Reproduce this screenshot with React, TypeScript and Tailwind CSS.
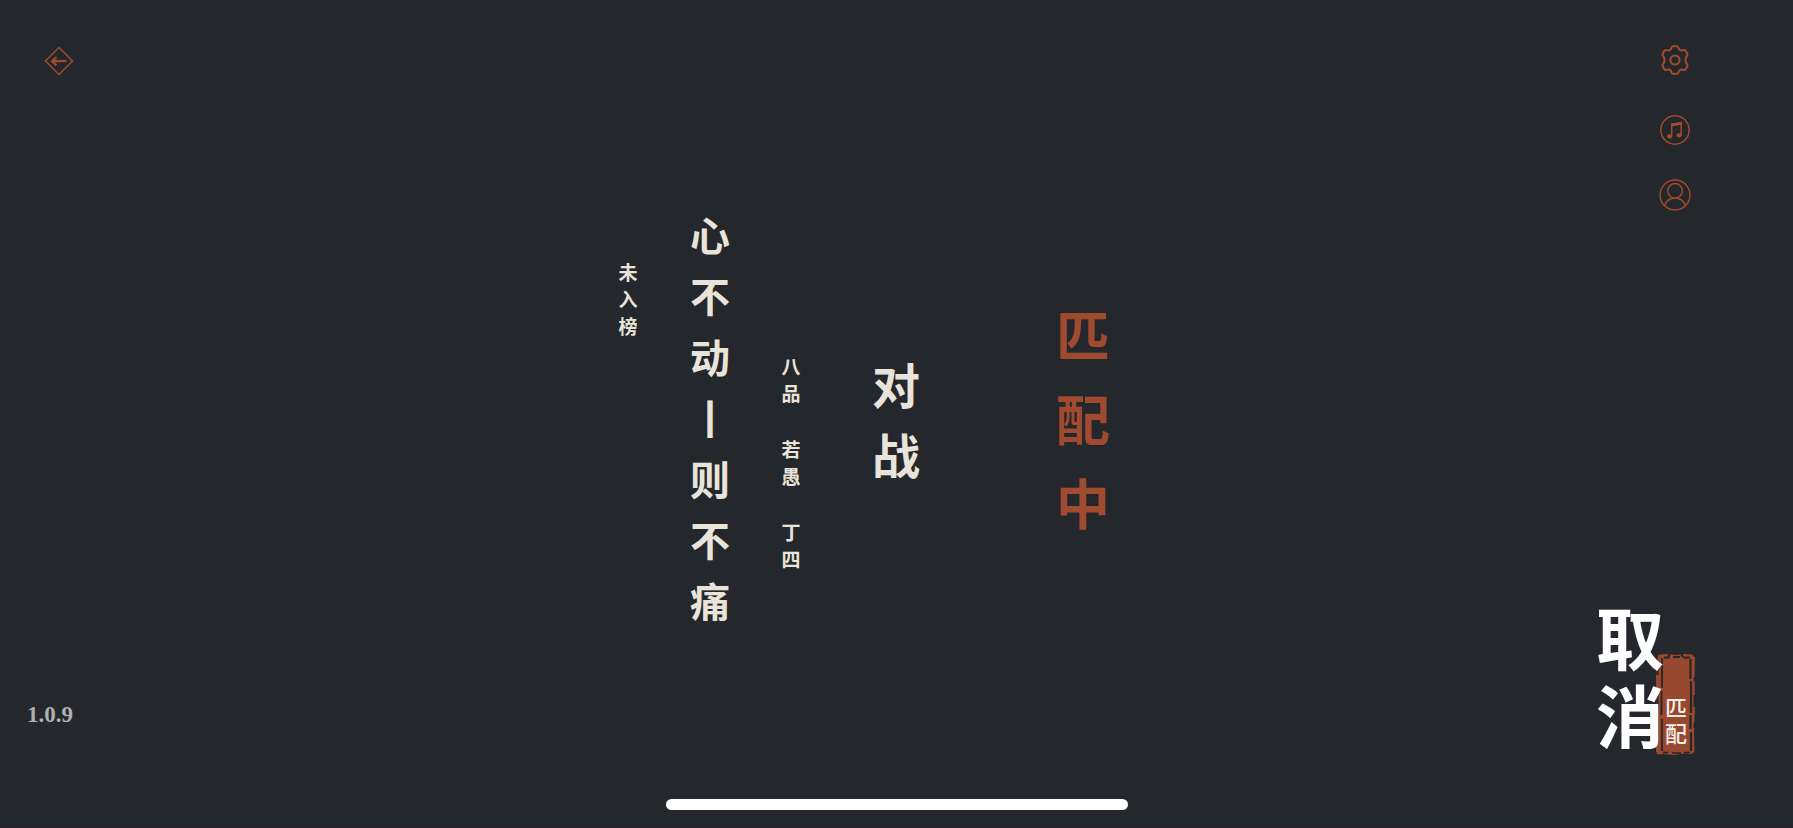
import React from "react";

const BRUSH = "font-['Noto_Sans_CJK_SC',sans-serif] font-bold";

function BackIcon() {
  return (
    <svg viewBox="0 0 30 30" className="w-[30px] h-[30px]" fill="none" stroke="currentColor" strokeWidth="1.5">
      <path d="M15 1.500 28.500 15 15 28.500 1.500 15Z" />
      <path d="M22.500 15.200H8.500M12.500 11 8 15.200l4.500 4.200" strokeWidth="2.200" />
    </svg>
  );
}

function GearIcon() {
  return (
    <svg viewBox="0 0 30 30" className="w-[30px] h-[30px]" fill="none" stroke="currentColor" strokeWidth="2" strokeLinejoin="round">
      <path d="M13.2 1.2h3.6c1.2 0 1.6.7 1.8 1.8.4 1.9 2.2 2.9 4.2 2.2 1.5-.5 2.4-.3 3 .8l1.4 2.4c.6 1.1.5 1.9-.4 2.8-1.7 1.7-1.7 5.9 0 7.6.9.9 1 1.7.4 2.800l-1.4 2.400c-.6 1.100-1.500 1.300-3 .8-2-.7-3.800.3-4.200 2.200-.2 1.100-.6 1.800-1.800 1.800h-3.600c-1.200 0-1.600-.7-1.800-1.800-.4-1.900-2.200-2.900-4.200-2.200-1.500.5-2.400.3-3-.8l-1.400-2.400c-.6-1.100-.5-1.900.4-2.800 1.700-1.700 1.700-5.900 0-7.600-.9-.9-1-1.700-.4-2.800l1.400-2.400c.6-1.100 1.500-1.300 3-.8 2 .7 3.800-.3 4.200-2.200.2-1.100.6-1.800 1.800-1.800Z" />
      <circle cx="15" cy="15" r="4.600" />
    </svg>
  );
}

function MusicIcon() {
  return (
    <svg viewBox="0 0 30 30" className="w-[30px] h-[30px]" fill="none" stroke="currentColor" strokeWidth="1.5">
      <circle cx="15" cy="15" r="14.200" />
      <path d="M11.700 21.500V9.200l9.500-1.600v12.600" />
      <path d="M11 8.700 22 6.900v2.800l-11 1.700Z" fill="currentColor" stroke="none" />
      <ellipse cx="9.600" cy="21.400" rx="2.600" ry="2.100" fill="currentColor" stroke="none" />
      <ellipse cx="19" cy="20.300" rx="2.600" ry="2.100" fill="currentColor" stroke="none" />
    </svg>
  );
}

function UserIcon() {
  return (
    <svg viewBox="0 0 32 32" className="w-8 h-8" fill="none" stroke="currentColor" strokeWidth="1.4">
      <circle cx="16" cy="16" r="15" />
      <circle cx="16" cy="11.800" r="7.300" />
      <path d="M5.500 26.600C7.400 21.700 11 19 16 19s8.600 2.700 10.500 7.600" />
    </svg>
  );
}

function SealFrame() {
  return (
    <svg viewBox="0 0 40 104" className="absolute inset-0 w-full h-full" fill="none">
      <path d="M2 2 9 1l12 1 8-1 7 .5 3 3-.5 20 .5 30-1 25 .5 19-3 2.500-8-.5-9 1.500-11-1-6 .5-1.500-3 .5-40-.5-35Z" fill="#98482e" />
      <g stroke="#24272b">
        <path d="M6 5v30M5.500 38v24M6 66v32" strokeWidth="1.800" />
        <path d="M8 4.500h6M17 4h7M27 4.500h7" strokeWidth="1.800" />
        <path d="M34.500 6v20M35 28v32M34.500 62v14M35 79v19" strokeWidth="2.200" />
        <path d="M7 99.500h5M16 100h9M28 99.500h6" strokeWidth="1.600" />
        <path d="M1.500 14v8M1.500 40v14M38.500 24v4M38.500 42v12M38.500 70v5M13 1v3M26 1v3" strokeWidth="2" />
      </g>
    </svg>
  );
}

export default function App() {
  return (
    <div className="min-h-screen flex flex-col bg-[#24272b] text-[#e8e4da] border-b border-[#2a2028]">
      <main className="flex-1 flex">
        <aside className="w-[133px] shrink-0 flex flex-col justify-between pt-[46px] pb-[70px]">
          <button aria-label="返回" className="ml-11 w-[30px] text-[#a34a2e] cursor-pointer">
            <BackIcon />
          </button>
          <span className="ml-[27px] font-['Liberation_Serif',serif] font-bold text-[23px] leading-[28px] text-[#afb0b1]">
            1.0.9
          </span>
        </aside>

        <section className={`${BRUSH} flex-1 flex items-center justify-center pt-9`}>
          <div className="flex items-start">
            <p className="mt-[54px] w-5 text-[19px] leading-[27px] text-center break-all">未入榜</p>
            <h1 className="ml-[50px] w-11 text-[40px] leading-[61px] text-center break-all">心不动丨则不痛</h1>
            <div className="ml-[49px] mt-[148px] w-5 flex flex-col gap-[29px] text-[19px] leading-[27px] text-center break-all">
              <span>八品</span>
              <span>若愚</span>
              <span>丁四</span>
            </div>
          </div>
          <h2 className="ml-[70px] w-[50px] text-[48px] leading-[70px] text-center break-all">对战</h2>
          <p className="ml-[134px] w-14 text-[54px] leading-[84px] text-center break-all text-[#a04a2f]">匹配中</p>
        </section>

        <aside className="w-[197px] shrink-0 flex flex-col justify-between pt-[45px] pb-[42px]">
          <nav className="ml-[63px] w-8 flex flex-col items-center text-[#a34a2e]">
            <button aria-label="设置" className="cursor-pointer">
              <GearIcon />
            </button>
            <button aria-label="音乐" className="mt-10 cursor-pointer">
              <MusicIcon />
            </button>
            <button aria-label="个人" className="mt-[34px] cursor-pointer">
              <UserIcon />
            </button>
          </nav>

          <button className="flex items-end cursor-pointer">
            <span className={`${BRUSH} relative z-10 w-[68px] pb-1 text-[68px] leading-[78px] break-all text-white`}>取消</span>
            <span className="relative -ml-2 w-10 h-[104px] flex flex-col items-center justify-end pb-3 text-[#f4efe9]">
              <SealFrame />
              <span className="relative w-6 text-[22px] leading-[26px] font-medium text-center break-all font-['Noto_Sans_CJK_SC',sans-serif]">
                匹配
              </span>
            </span>
          </button>
        </aside>
      </main>

      <footer className="flex justify-center pb-[17px]">
        <div className="w-[462px] h-[11px] rounded-full bg-white" />
      </footer>
    </div>
  );
}
